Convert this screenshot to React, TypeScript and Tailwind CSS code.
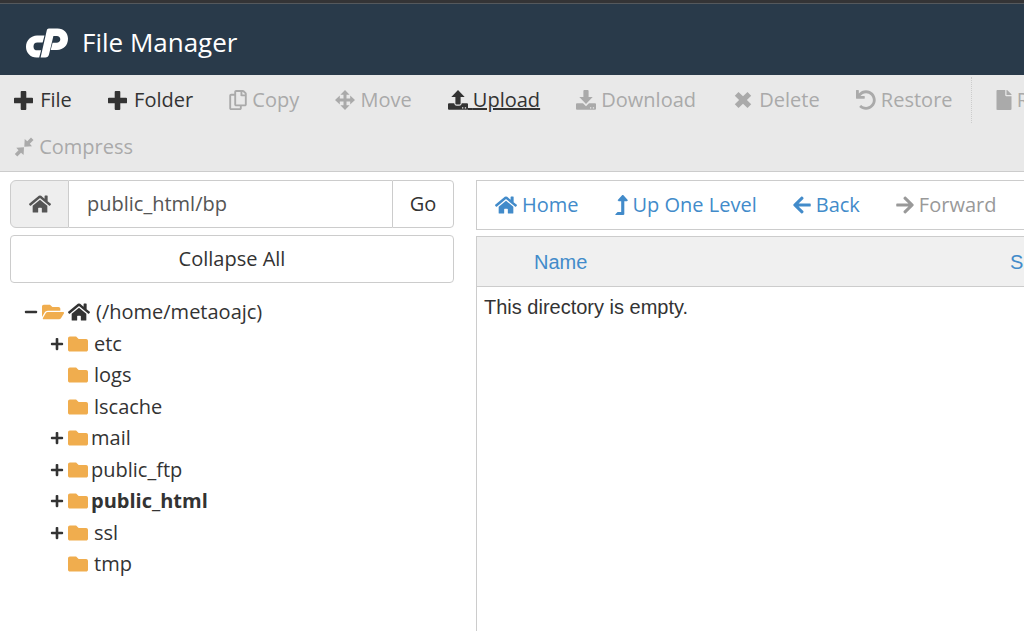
import React, { useState } from 'react';
import {
  FaArrowLeft,
  FaArrowRight,
  FaFile,
  FaFolder,
  FaFolderOpen,
  FaHome,
  FaLevelUpAlt,
  FaMinus,
  FaPlus,
  FaRegCopy,
  FaUndo,
} from 'react-icons/fa';

const IconAdd = () => (
  <svg viewBox="0 0 21 19" className="h-[19px] w-[21px]" fill="currentColor">
    <path d="M7.600 0h3.800q.9 0 .9.900v5.800h5.800q.9 0 .9.900v3.800q0 .9-.9.900h-5.800v5.800q0 .9-.9.900H7.600q-.9 0-.9-.9v-5.800H.9q-.9 0-.9-.9V7.600q0-.9.900-.9h5.800V.9q0-.9.900-.9z" />
  </svg>
);

const IconMove = () => (
  <svg viewBox="0 0 20 20" className="h-5 w-5" fill="currentColor">
    <path d="M10 0l4.600 4.800h-3.100v3.700h3.700V5.400L20 10l-4.800 4.600v-3.100h-3.700v3.700h3.100L10 20l-4.600-4.800h3.100v-3.700H4.800v3.100L0 10l4.800-4.600v3.100h3.700V4.800H5.400z" />
  </svg>
);

const IconUpload = () => (
  <svg viewBox="0 0 20 20" className="h-5 w-5" fill="currentColor">
    <path d="M10 0l6.700 7h-4.100v6.500q0 .9-.9.900H8.300q-.9 0-.9-.9V7H3.300z" />
    <path
      fillRule="evenodd"
      d="M1 13.200h5.200c.3 1.700 1.300 2.500 2.600 2.500h2.400c1.300 0 2.300-.8 2.600-2.500H19q1 0 1 1v4.600q0 1-1 1H1q-1 0-1-1v-4.600q0-1 1-1zM14 17.200v1.300h1.300v-1.300zM16.800 17.200v1.300h1.300v-1.300z"
    />
  </svg>
);

const IconDownload = () => (
  <svg viewBox="0 0 20 20" className="h-5 w-5" fill="currentColor">
    <path d="M8.300 0h3.400q.9 0 .9.900V7h4.100L10 14 3.300 7h4.100V.9q0-.9.900-.9z" />
    <path
      fillRule="evenodd"
      d="M1 13.200h6L10 16.200l3-3h6q1 0 1 1v4.600q0 1-1 1H1q-1 0-1-1v-4.600q0-1 1-1zM14 17.200v1.300h1.300v-1.300zM16.800 17.200v1.300h1.300v-1.300z"
    />
  </svg>
);

const IconDelete = () => (
  <svg viewBox="0 0 22 16" className="h-4 w-[22px]" fill="currentColor">
    <path d="M6.500 0 11 4.300 15.500 0 19.200 3.700 14.900 8 19.200 12.300 15.500 16 11 11.700 6.500 16 2.800 12.300 7.100 8 2.800 3.700z" />
  </svg>
);

const IconCompress = () => (
  <svg viewBox="0 0 20 20" className="h-5 w-5" fill="currentColor">
    <path d="M17 .5 19.500 3 15.800 6.700 18 9.300l-7.700.4L10.700 2l2.600 2.200z" />
    <path d="M3.300 19.500.8 17 4.500 13.300 2.300 10.700l7.700-.4L9.600 18 7 15.800z" />
  </svg>
);

const Logo = () => (
  <svg viewBox="0 0 42 30" className="h-[30px] w-[42px]" fill="#fff">
    <path d="M11 7.500h7.500l-1.900 7h-5.200a3.900 3.900 0 0 0 0 7.800h3.700L13.200 29.500H10.500C4.300 29.500 0 24.500 0 18.700 0 12.500 5 7.500 11 7.500z" />
    <path d="M22.800.5h8.700C38 .5 42 5 42 10.800 42 17.300 37.500 22 31 22h-6.300l1.900-7.200h3.900c2.300 0 3.800-1.600 3.800-3.600 0-1.900-1.400-3.300-3.400-3.300h-3.500L23 26.500c-.5 1.900-1.700 3-3.700 3h-4.700L20.800 2.300C21.100 1.200 21.800.5 22.800.5z" />
  </svg>
);

interface Action {
  label: string;
  icon: React.ReactNode;
  enabled?: boolean;
  active?: boolean;
}

const actions: Action[] = [
  { label: 'File', icon: <IconAdd />, enabled: true },
  { label: 'Folder', icon: <IconAdd />, enabled: true },
  { label: 'Copy', icon: <FaRegCopy className="h-5 w-[18px]" /> },
  { label: 'Move', icon: <IconMove /> },
  { label: 'Upload', icon: <IconUpload />, enabled: true, active: true },
  { label: 'Download', icon: <IconDownload /> },
  { label: 'Delete', icon: <IconDelete /> },
  { label: 'Restore', icon: <FaUndo className="h-5 w-5" /> },
];

const folders = [
  { name: 'etc', expandable: true, style: 'pl-1.5' },
  { name: 'logs', expandable: false, style: 'pl-1.5' },
  { name: 'lscache', expandable: false, style: 'pl-1.5' },
  { name: 'mail', expandable: true, style: 'pl-[3px]' },
  { name: 'public_ftp', expandable: true, style: 'pl-[3px]' },
  { name: 'public_html', expandable: true, style: 'pl-[3px] font-bold' },
  { name: 'ssl', expandable: true, style: 'pl-1.5' },
  { name: 'tmp', expandable: false, style: 'pl-1.5' },
];

const ToolbarButton: React.FC<{ action: Action }> = ({ action }) => (
  <button
    disabled={!action.enabled}
    className={`flex shrink-0 items-center ${action.enabled ? 'text-[#333]' : 'text-[#aaa]'}`}
  >
    {action.icon}
    {/* the underline also runs under the space after the icon */}
    <span className={action.active ? 'underline' : ''}>&nbsp;{action.label}</span>
  </button>
);

export default function App() {
  const [path, setPath] = useState('public_html/bp');

  return (
    <div className="flex min-h-screen flex-col overflow-hidden bg-white font-['Open_Sans',sans-serif] text-xl text-[#333]">
      <div className="h-[3px] bg-[#343436]" />
      <header className="flex h-[72px] items-center gap-[14px] border-t border-[#55595d] bg-[#293a4a] pl-[26px] pt-1.5 text-white">
        <Logo />
        <h1 className="text-[26px]">File Manager</h1>
      </header>

      <div className="border-b border-[#ccc] bg-[#e9e9e9] pl-3.5 whitespace-nowrap">
        <div className="flex h-12 gap-9 overflow-hidden pt-0.5">
          {actions.map((action) => (
            <ToolbarButton key={action.label} action={action} />
          ))}
          <div className="-ml-[18px] flex border-l border-dotted border-[#ccc] pl-6">
            <ToolbarButton action={{ label: 'Rename', icon: <FaFile className="h-5 w-4" /> }} />
          </div>
        </div>
        <div className="flex h-12">
          <ToolbarButton action={{ label: 'Compress', icon: <IconCompress /> }} />
        </div>
      </div>

      <div className="flex flex-1">
        <aside className="ml-2.5 w-[444px] shrink-0 pt-2">
          <form className="flex h-12" onSubmit={(e) => e.preventDefault()}>
            <label
              htmlFor="path"
              aria-label="Path"
              className="flex w-[59px] items-center justify-center rounded-l-md border border-[#ccc] bg-[#eee] text-[#555]"
            >
              <FaHome className="h-5 w-[22px]" />
            </label>
            <input
              id="path"
              type="text"
              value={path}
              onChange={(e) => setPath(e.target.value)}
              className="min-w-0 flex-1 border-y border-[#ccc] px-[18px] text-[#555] outline-none"
            />
            <button className="w-[62px] rounded-r border border-[#ccc]">Go</button>
          </form>
          <button className="mt-[7px] h-12 w-full rounded border border-[#ccc]">Collapse All</button>

          <ul className="mt-[13px]">
            <li>
              <div className="flex h-8 items-center pl-3.5">
                <FaMinus className="mr-1 h-3.5 w-3.5" />
                <FaFolderOpen className="mr-1 h-5 w-[22px] text-[#f0ad4e]" />
                <FaHome className="mr-1.5 h-5 w-[22px]" />
                (/home/metaoajc)
              </div>
              <ul className="flex h-[252px] flex-col pl-10">
                {folders.map((folder) => (
                  <li key={folder.name} className="flex flex-1 items-center">
                    <span className="w-[18px]">
                      {folder.expandable && <FaPlus className="h-3.5 w-3.5" />}
                    </span>
                    <FaFolder className="h-5 w-5 text-[#f0ad4e]" />
                    <span className={folder.style}>{folder.name}</span>
                  </li>
                ))}
              </ul>
            </li>
          </ul>
        </aside>

        <main className="ml-[22px] flex min-w-0 flex-1 flex-col pt-2">
          <nav className="flex h-[50px] items-center gap-9 overflow-hidden border-y border-l border-[#ccc] pl-[18px] whitespace-nowrap text-[#428bca]">
            <a href="#home" className="flex items-center gap-[5px]">
              <FaHome className="h-5 w-[22px]" />
              Home
            </a>
            <a href="#up" className="flex items-center gap-[5px]">
              <FaLevelUpAlt className="h-5 w-[13px]" />
              Up One Level
            </a>
            <a href="#back" className="flex items-center gap-[5px]">
              <FaArrowLeft className="h-5 w-[18px]" />
              Back
            </a>
            <button disabled className="flex items-center gap-[5px] text-[#999]">
              <FaArrowRight className="h-5 w-[18px]" />
              Forward
            </button>
          </nav>

          <div className="mt-1.5 flex-1 overflow-hidden border-l border-[#ccc] font-['Liberation_Sans',Arial,sans-serif]">
            <table className="w-full table-fixed border-collapse text-left">
              <thead>
                <tr className="h-[50px] border-y border-[#ccc] bg-[#f0f0f0] text-[#428bca]">
                  <th className="pl-[57px] font-normal">Name</th>
                  <th className="w-[14px] font-normal">Size</th>
                </tr>
              </thead>
              <tbody>
                <tr>
                  <td colSpan={2} className="px-[7px] py-1.5">
                    This directory is empty.
                  </td>
                </tr>
              </tbody>
            </table>
          </div>
        </main>
      </div>
    </div>
  );
}
